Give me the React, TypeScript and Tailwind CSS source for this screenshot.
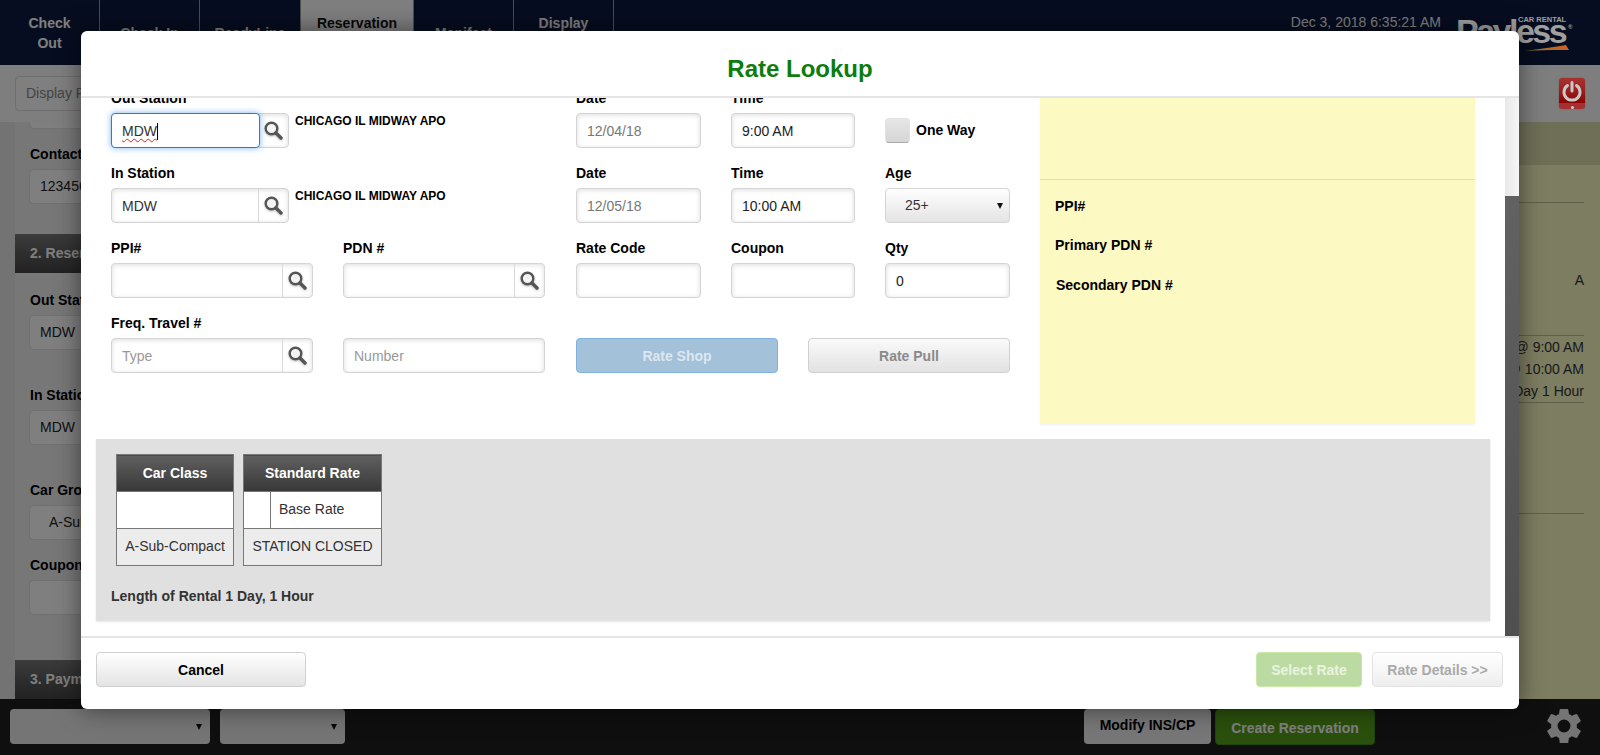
import { ReactNode } from "react"

const inputBox = "h-[35px] rounded border border-[#d4d4d4] bg-white shadow-[inset_0_1px_5px_rgba(0,0,0,0.14)] px-[10px] text-[14px] leading-[33px] outline-none"

function SearchIcon() {
  return (
    <svg width="19" height="19" viewBox="0 0 19 19" fill="none" className="drop-shadow-[0_1px_1px_rgba(0,0,0,0.25)]">
      <circle cx="7.5" cy="7.5" r="5.8" stroke="#555" strokeWidth="2.4" fill="#f4f4f4" />
      <line x1="12" y1="12" x2="17" y2="17" stroke="#555" strokeWidth="3.4" strokeLinecap="round" />
    </svg>
  )
}

function Label({ children }: { children: ReactNode }) {
  return <div className="h-5 mb-[5px] text-[14px] leading-5 font-bold text-black whitespace-nowrap">{children}</div>
}

// input with the magnifier box stuck on its right side
function SearchInput({ value, placeholder, width }: { value?: string; placeholder?: string; width: string }) {
  return (
    <div className={`${width} ${inputBox} flex !px-0`}>
      <input readOnly value={value ?? ""} placeholder={placeholder} className="flex-1 min-w-0 h-full px-[10px] bg-transparent outline-none text-[#333] placeholder:text-[#999]" />
      <div className="w-[30px] border-l border-[#d9d9d9] flex items-center justify-center">
        <SearchIcon />
      </div>
    </div>
  )
}

function Field({ label, value, muted }: { label: string; value?: string; muted?: boolean }) {
  return (
    <div>
      <Label>{label}</Label>
      <input readOnly value={value ?? ""} className={`w-full ${inputBox} ${muted ? "text-[#777]" : "text-[#222]"}`} />
    </div>
  )
}

function Arrow() {
  return <span className="w-0 h-0 border-x-[3px] border-x-transparent border-t-[6px] border-t-[#111]" />
}

function Nav({ label, second, active, w }: { label: string; second?: string; active?: boolean; w: string }) {
  return (
    <div className={`${w} h-[65px] border-r border-[#999] flex flex-col items-center justify-center text-center text-[14px] leading-5 font-bold ${active ? "bg-white text-[#111]" : "text-white"}`}>
      <span>{label}</span>
      {second && <span>{second}</span>}
    </div>
  )
}

function BgField({ label, value, mt, pad }: { label: string; value?: string; mt: string; pad?: string }) {
  return (
    <div className={mt}>
      <div className="h-5 text-[14px] leading-5 font-bold text-black whitespace-nowrap">{label}</div>
      <div className={`mt-[6px] w-[200px] h-[33px] rounded bg-white shadow-[0_0_2px_rgba(0,0,0,0.2)] text-[14px] leading-[33px] ${pad ?? "px-[10px]"} text-[#222] whitespace-nowrap`}>{value}</div>
    </div>
  )
}

function SectionHead({ children, mt }: { children: ReactNode; mt: string }) {
  return <div className={`${mt} -ml-[15px] h-[39px] w-[300px] bg-gradient-to-b from-[#777] to-[#444] text-[14px] leading-[39px] font-bold text-white pl-[15px]`}>{children}</div>
}

function BottomBar() {
  return (
    <div className="h-[56px] shrink-0 bg-[#1e1e1e] flex items-start pt-[10px] pl-[10px] pr-[19px]">
      <div className="w-[200px] h-[35px] rounded bg-[#ebebeb] flex items-center justify-end pr-[8px]"><Arrow /></div>
      <div className="w-[125px] h-[35px] ml-[10px] rounded bg-[#ebebeb] flex items-center justify-end pr-[8px]"><Arrow /></div>
      <div className="ml-auto w-[127px] h-[35px] rounded bg-[#eeeeee] text-[14px] leading-[33px] font-bold text-black text-center">Modify INS/CP</div>
      <div className="ml-[4px] w-[160px] h-[36px] rounded border border-[#3f8a14] bg-[#569e18] text-[14px] leading-[36px] font-bold text-white text-center">Create Reservation</div>
      <svg className="ml-[172px]" width="34" height="34" viewBox="2.5 2.5 19 19" fill="#ebebeb" fillRule="evenodd">
        <path d="M19.14 12.94c.04-.3.06-.61.06-.94s-.02-.64-.07-.94l2.03-1.58a.5.5 0 0 0 .12-.64l-1.92-3.32a.5.5 0 0 0-.61-.22l-2.39.96a7 7 0 0 0-1.62-.94l-.36-2.54a.48.48 0 0 0-.48-.41h-3.84a.48.48 0 0 0-.47.41l-.36 2.54c-.59.24-1.13.57-1.62.94l-2.39-.96a.49.49 0 0 0-.59.22L2.74 8.84a.48.48 0 0 0 .12.64l2.03 1.58c-.05.3-.09.63-.09.94s.02.64.07.94l-2.03 1.58a.5.5 0 0 0-.12.64l1.92 3.32c.12.22.37.29.59.22l2.39-.96c.5.38 1.03.7 1.62.94l.36 2.54c.05.24.24.41.48.41h3.84c.24 0 .44-.17.47-.41l.36-2.54c.59-.24 1.13-.56 1.62-.94l2.39.96c.22.08.47 0 .59-.22l1.92-3.32a.48.48 0 0 0-.12-.64zM12 15.6a3.6 3.6 0 1 1 0-7.2 3.6 3.6 0 0 1 0 7.2z" />
      </svg>
    </div>
  )
}

function Page() {
  return (
    <div className="h-[755px] flex flex-col overflow-hidden bg-white">
      <header className="h-[65px] shrink-0 bg-[#0f1a40] flex">
        <Nav w="w-[100px]" label="Check" second="Out" />
        <Nav w="w-[100px]" label="Check In" />
        <Nav w="w-[101px]" label="ReadyLine" />
        <Nav w="w-[113px]" label="Reservation" second={"\u00a0"} active />
        <Nav w="w-[100px]" label="Manifest" />
        <Nav w="w-[100px]" label="Display" second={"\u00a0"} />
        <div className="ml-auto flex items-start pt-[13px] pr-[30px] text-white text-[14px] leading-[18px]">
          <span className="mr-[15px]">Dec 3, 2018 6:35:21 AM</span>
          {/* logo keeps its own colours above the backdrop */}
          <div className="relative z-10 w-[114px] h-[50px] text-[#a0a0a0] font-bold">
            <span className="absolute left-[62px] top-[3px] text-[7.5px] leading-[8px] whitespace-nowrap">CAR RENTAL</span>
            <span className="absolute left-[112px] top-[11px] text-[6px] leading-[6px]">®</span>
            <span className="absolute left-0 top-[1px] text-[34px] leading-[34px] tracking-[-2.5px]">Payless</span>
            <svg className="absolute left-[69px] top-[32px]" width="44" height="6" viewBox="0 0 44 6">
              <defs>
                <linearGradient id="swoosh" x1="0" x2="1" y1="0" y2="0">
                  <stop offset="0" stopColor="#8a7a30" />
                  <stop offset="1" stopColor="#cf5f2a" />
                </linearGradient>
              </defs>
              <path d="M0 6 C14 4 30 2 41 0 L44 5 L36 5 C24 5 12 5 0 6 Z" fill="url(#swoosh)" />
            </svg>
          </div>
        </div>
      </header>
      <div className="h-[57px] shrink-0 bg-[#fdfdfd] flex items-center justify-between pl-[15px] pr-[14px]">
        <div className="w-[200px] h-[35px] rounded border border-[#ddd] bg-white px-[10px] text-[14px] leading-[33px] text-[#888]">Display Reservation</div>
        <div className="relative z-10 w-[28px] h-[33px] rounded-sm border border-[#777] overflow-hidden flex flex-col">
          <div className="h-[25px] bg-gradient-to-b from-[#a83232] to-[#8c0000] flex items-center justify-center">
            <svg width="22" height="22" viewBox="0 0 22 22" fill="none" stroke="#c8c8c8" strokeWidth="3" strokeLinecap="round">
              <path d="M6.5 5.5 A8 8 0 1 0 15.5 5.5" />
              <line x1="11" y1="2.5" x2="11" y2="11" />
            </svg>
          </div>
          <div className="flex-1 bg-[#a63030] flex items-end justify-center"><span className="w-[3px] h-[3px] rounded-full bg-[#ccc]" /></div>
        </div>
      </div>
      <div className="flex-1 min-h-0 flex">
        <div className="w-[600px] pl-[15px] bg-[#e6e6e6] overflow-hidden">
          <div className="h-full pl-[15px] bg-[#efefef]">
            <div className="w-[200px] h-[6px] bg-white rounded-b shadow-[0_0_2px_rgba(0,0,0,0.2)]" />
            <BgField mt="mt-[16px]" label="Contact" value="1234567890" />
            <SectionHead mt="mt-[31px]">2. Reservation</SectionHead>
            <BgField mt="mt-[17px]" label="Out Station" value="MDW" />
            <BgField mt="mt-[36px]" label="In Station" value="MDW" />
            <BgField mt="mt-[36px]" label="Car Group" value="A-Sub-Compact" pad="px-[19px]" />
            <BgField mt="mt-[16px]" label="Coupon" />
            <SectionHead mt="mt-[46px]">3. Payment</SectionHead>
          </div>
        </div>
        <div className="flex-1 bg-[#fafac4] flex flex-col">
          <div className="h-[43px] shrink-0 bg-[#dedeb0]" />
          <div className="pr-[16px] flex flex-col items-end">
            <div className="w-[200px] mt-[37px] border-t border-[#c0c098] text-right text-[14px] text-[#333]">
              <div className="mt-[67px] h-[65px] leading-[20px]">A</div>
            </div>
            <div className="w-[200px] border-t border-b border-[#c0c098] text-right text-[14px] leading-[22px] text-[#333] whitespace-nowrap">
              <div>12/04/18 @ 9:00 AM</div>
              <div>12/05/18 @ 10:00 AM</div>
              <div>1 Day 1 Hour</div>
            </div>
            <div className="w-[200px] mt-[110px] border-t border-[#c0c098]" />
          </div>
        </div>
      </div>
      <BottomBar />
    </div>
  )
}

function ModalForm() {
  return (
    <div className="w-[914px] shrink-0 pl-[15px] -mt-[10px]">
      <div className="flex mb-[15px]">
        <div className="w-[465px] flex-none">
          <Label>Out Station</Label>
          <div className="flex gap-[6px]">
            <div className="w-[178px] h-[35px] flex rounded border border-[#d4d4d4] shadow-[inset_0_1px_5px_rgba(0,0,0,0.14)] relative">
              <div className="absolute -left-px -top-px w-[149px] h-[35px] rounded border border-[#2a7fc4] bg-white shadow-[0_0_6px_rgba(70,150,230,0.7)] pl-[10px] text-[14px] leading-[34px] text-[#333]">
                <span className="underline decoration-wavy decoration-[#e02020] decoration-1 underline-offset-2">MDW</span>
                <span className="inline-block w-px h-[17px] bg-black align-[-4px]" />
              </div>
              <div className="ml-auto w-[29px] flex items-center justify-center"><SearchIcon /></div>
            </div>
            <div className="text-[12px] leading-[14px] font-bold text-black pt-[1px]">CHICAGO IL MIDWAY APO</div>
          </div>
        </div>
        <div className="w-[125px]"><Field label="Date" value="12/04/18" muted /></div>
        <div className="w-[124px] ml-[30px]"><Field label="Time" value="9:00 AM" /></div>
        <div className="ml-[30px] flex items-center gap-[6px] pt-[25px] h-[60px]">
          <div className="w-[25px] h-[25px] rounded-sm bg-gradient-to-b from-[#e6e6e6] to-[#d6d6d6] border border-[#e2e2e2] border-b-[#aaa]" />
          <span className="text-[14px] font-bold text-black">One Way</span>
        </div>
      </div>
      <div className="flex mb-[15px]">
        <div className="w-[465px] flex-none">
          <Label>In Station</Label>
          <div className="flex gap-[6px]">
            <SearchInput width="w-[178px]" value="MDW" />
            <div className="text-[12px] leading-[14px] font-bold text-black pt-[1px]">CHICAGO IL MIDWAY APO</div>
          </div>
        </div>
        <div className="w-[125px]"><Field label="Date" value="12/05/18" muted /></div>
        <div className="w-[124px] ml-[30px]"><Field label="Time" value="10:00 AM" /></div>
        <div className="w-[125px] ml-[30px]">
          <Label>Age</Label>
          <div className="h-[35px] rounded border border-[#d4d4d4] bg-gradient-to-b from-white to-[#e4e4e4] flex items-center justify-between pl-[19px] pr-[6px] text-[14px] text-[#333]">
            25+ <Arrow />
          </div>
        </div>
      </div>
      <div className="flex mb-[15px]">
        <div className="w-[202px]"><Label>PPI#</Label><SearchInput width="w-full" /></div>
        <div className="w-[202px] ml-[30px]"><Label>PDN #</Label><SearchInput width="w-full" /></div>
        <div className="w-[125px] ml-[31px]"><Field label="Rate Code" /></div>
        <div className="w-[124px] ml-[30px]"><Field label="Coupon" /></div>
        <div className="w-[125px] ml-[30px]"><Field label="Qty" value="0" /></div>
      </div>
      <div>
        <Label>Freq. Travel #</Label>
        <div className="flex">
          <SearchInput width="w-[202px]" placeholder="Type" />
          <input readOnly placeholder="Number" className={`w-[202px] ml-[30px] ${inputBox} placeholder:text-[#999]`} />
          <button className="w-[202px] h-[35px] ml-[31px] pt-px rounded border border-[#7fb2e0] bg-[#a3c1d8] text-[14px] font-bold text-[#dde7f0]">Rate Shop</button>
          <button className="w-[202px] h-[35px] ml-[30px] pt-px rounded border border-[#d0d0d0] bg-gradient-to-b from-[#fafafa] to-[#e2e2e2] text-[14px] font-bold text-[#8a8a8a]">Rate Pull</button>
        </div>
      </div>
    </div>
  )
}

function RateTables() {
  return (
    <div className="flex gap-[9px] text-[14px] text-[#333] text-center">
      <table className="w-[118px] h-[112px] border-collapse border border-[#777]">
        <tbody>
          <tr className="h-[37px]"><th className="bg-gradient-to-b from-[#606060] to-[#383838] text-white border-b border-[#777]">Car Class</th></tr>
          <tr className="h-[36px]"><td className="bg-white border-b border-[#777]" /></tr>
          <tr className="h-[37px]"><td className="bg-[#ececec] whitespace-nowrap">A-Sub-Compact</td></tr>
        </tbody>
      </table>
      <table className="w-[139px] h-[112px] border-collapse border border-[#777]">
        <tbody>
          <tr className="h-[37px]"><th colSpan={2} className="bg-gradient-to-b from-[#606060] to-[#383838] text-white border-b border-[#777]">Standard Rate</th></tr>
          <tr className="h-[36px]">
            <td className="w-[27px] bg-white border-b border-r border-[#777]" />
            <td className="bg-white border-b border-[#777] text-left pl-[8px]">Base Rate</td>
          </tr>
          <tr className="h-[37px]"><td colSpan={2} className="bg-[#ececec] whitespace-nowrap">STATION CLOSED</td></tr>
        </tbody>
      </table>
    </div>
  )
}

function Modal() {
  return (
    <div className="absolute z-20 left-[81px] top-[31px] w-[1438px] h-[678px] rounded-md bg-white flex flex-col overflow-hidden shadow-[0_0_25px_rgba(0,0,0,0.5)]">
      <div className="h-[67px] shrink-0 border-b-2 border-[#e5e5e5] text-center text-[24px] leading-[76px] font-bold text-[#0b7d0b]">Rate Lookup</div>
      <div className="flex-1 min-h-0 flex">
        <div className="flex-1 min-w-0 px-[15px] overflow-hidden">
          <div className="h-[326px] flex">
            <ModalForm />
            <div className="ml-[30px] w-[435px] bg-[#fcf9c2] flex flex-col shadow-[0_1px_2px_rgba(0,0,0,0.06)]">
              <div className="h-[82px] border-b border-[#e6e0a8]" />
              <div className="pl-[15px] pt-[16px] text-[14px] leading-5 font-bold text-black">
                <div>PPI#</div>
                <div className="mt-[19px]">Primary PDN #</div>
                <div className="mt-[20px] ml-px">Secondary PDN #</div>
              </div>
            </div>
          </div>
          <div className="mt-[15px] h-[182px] bg-[#e0e0e0] pl-[20px] pt-[15px] shadow-[0_1px_2px_rgba(0,0,0,0.1)]">
            <RateTables />
            <div className="-ml-[5px] mt-[20px] text-[14px] leading-5 font-bold text-[#333]">Length of Rental 1 Day, 1 Hour</div>
          </div>
        </div>
        <div className="w-[14px] shrink-0 bg-gradient-to-b from-[#666] to-[#4f4f4f] flex flex-col">
          <div className="h-[98px] bg-gradient-to-r from-[#e8e8e8] to-[#f6f6f6]" />
        </div>
      </div>
      <div className="h-[73px] shrink-0 border-t-2 border-[#e5e5e5] flex items-start justify-between pt-[14px] pl-[15px] pr-[16px]">
        <button className="w-[210px] h-[35px] pt-px rounded border border-[#d0d0d0] bg-gradient-to-b from-white to-[#e4e4e4] text-[14px] font-bold text-black">Cancel</button>
        <div className="flex gap-[10px]">
          <button className="w-[106px] h-[35px] pt-px rounded border border-[#c9e8a8] bg-[#bcdba2] text-[14px] font-bold text-[#eaf3e0]">Select Rate</button>
          <button className="w-[131px] h-[35px] pt-px rounded border border-[#e2e2e2] bg-gradient-to-b from-white to-[#eeeeee] text-[14px] font-bold text-[#aaa]">Rate Details &gt;&gt;</button>
        </div>
      </div>
    </div>
  )
}

export default function App() {
  return (
    <div className="relative w-[1600px] h-[755px] overflow-hidden font-['Liberation_Sans',Arial,sans-serif]">
      <Page />
      {/* backdrop over everything under the dialog */}
      <div className="absolute inset-0 bg-black/50" />
      <Modal />
    </div>
  )
}
